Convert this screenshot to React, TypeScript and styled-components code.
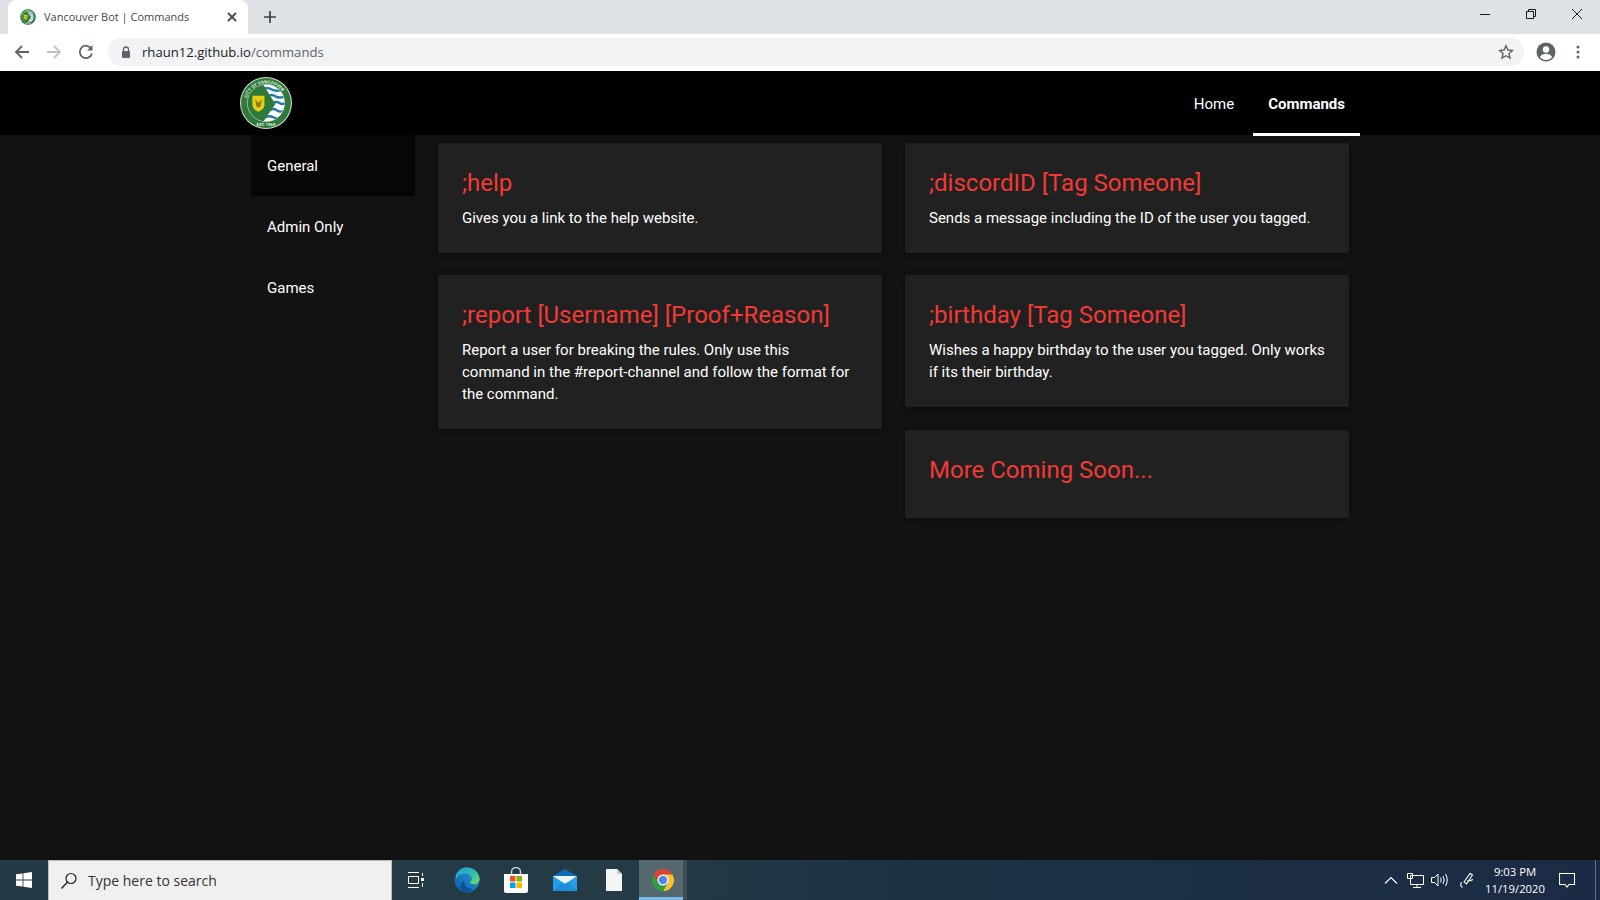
import React from 'react';
import styled, { createGlobalStyle } from 'styled-components';

const GlobalStyle = createGlobalStyle`
  html, body {
    margin: 0;
    padding: 0;
    height: 100%;
    overflow: hidden;
    background: #121212;
  }
  * {
    box-sizing: border-box;
  }
`;

const Screen = styled.div`
  width: 1600px;
  height: 900px;
  display: flex;
  flex-direction: column;
`;

/* browser chrome */
const TabStrip = styled.div`
  height: 34px;
  background: #dee1e6;
  display: flex;
  align-items: flex-end;
  padding-left: 8px;
`;

const Tab = styled.div`
  width: 240px;
  height: 34px;
  background: #fff;
  border-radius: 8px 8px 0 0;
  display: flex;
  align-items: center;
  padding: 0 8px 0 12px;
  gap: 8px;
`;

const TabTitle = styled.span`
  flex: 1;
  font-family: 'Open Sans', sans-serif;
  font-size: 11px;
  color: #45484c;
  white-space: nowrap;
  padding-bottom: 1px;
`;

const NewTab = styled.div`
  width: 28px;
  height: 34px;
  margin-left: 8px;
  display: flex;
  align-items: center;
  justify-content: center;
`;

const WindowControls = styled.div`
  margin-left: auto;
  height: 28px;
  align-self: flex-start;
  display: flex;
`;

const WindowButton = styled.div`
  width: 46px;
  height: 28px;
  display: flex;
  align-items: center;
  justify-content: center;
`;

const Toolbar = styled.div`
  height: 37px;
  background: #fff;
  display: flex;
  align-items: center;
  padding: 0 0 1px 6px;
`;

const ToolButton = styled.div`
  width: 32px;
  height: 28px;
  display: flex;
  align-items: center;
  justify-content: center;
  flex: none;
`;

const Omnibox = styled.div`
  width: 1416px;
  height: 28px;
  margin-left: 6px;
  background: #f1f3f4;
  border-radius: 14px;
  display: flex;
  align-items: center;
  padding: 0 10px 0 13px;
  gap: 11px;
  flex: none;
`;

const Url = styled.span`
  flex: 1;
  font-family: 'Open Sans', sans-serif;
  font-size: 13.1px;
  color: #202124;
  white-space: nowrap;
`;

const UrlPath = styled.span`
  color: #5f6368;
`;

const ProfileSlot = styled(ToolButton)`
  margin-left: 6px;
`;

/* the page */
const Page = styled.div`
  flex: 1;
  min-height: 0;
  background: #121212;
  font-family: Roboto, sans-serif;
  display: flex;
  flex-direction: column;
`;

const Navbar = styled.nav`
  height: 64px;
  background: #000;
  display: flex;
  align-items: center;
  justify-content: space-between;
  padding: 0 240px;
  flex: none;
`;

const NavLinks = styled.div`
  display: flex;
  gap: 4px;
  height: 65px;
  align-self: flex-start;
  position: relative;
`;

const NavLink = styled.a<{ $active?: boolean }>`
  height: 65px;
  padding: 4px 15px 0;
  display: flex;
  align-items: center;
  color: #fff;
  font-size: 15px;
  font-weight: ${(p) => (p.$active ? 700 : 400)};
  border-bottom: 3px solid ${(p) => (p.$active ? '#fff' : 'transparent')};
`;

const Body = styled.div`
  display: flex;
  padding-left: 251px;
  flex: 1;
`;

const Sidebar = styled.div`
  width: 164px;
  flex: none;
  display: flex;
  flex-direction: column;
`;

const SideItem = styled.div<{ $active?: boolean }>`
  height: 61px;
  padding: 0 16px;
  display: flex;
  align-items: center;
  color: #fff;
  font-size: 15px;
  background: ${(p) => (p.$active ? '#060606' : 'transparent')};
`;

const Columns = styled.div`
  display: flex;
  gap: 23px;
  margin-left: 23px;
  padding-top: 8px;
`;

const Column = styled.div`
  width: 444px;
  display: flex;
  flex-direction: column;
  gap: 22px;
`;

const Card = styled.div`
  background: #212121;
  border-radius: 2px;
  padding: 24px;
  box-shadow: 0 2px 6px rgba(0, 0, 0, 0.35);
`;

const LastCard = styled(Card)`
  margin-top: 1px;
`;

const CardTitle = styled.h2`
  margin: 0 0 8px;
  color: #f23a35;
  font-size: 24px;
  font-weight: 400;
  line-height: 32px;
`;

const CardText = styled.p`
  margin: 0;
  color: #fff;
  font-size: 15px;
  line-height: 22px;
`;

/* windows taskbar */
const Taskbar = styled.div`
  height: 40px;
  flex: none;
  background: linear-gradient(90deg, #233a44 0%, #243a44 40%, #1d3044 60%, #1b2b45 100%);
  display: flex;
  align-items: stretch;
  font-family: 'Open Sans', sans-serif;
`;

const StartButton = styled.div`
  width: 48px;
  display: flex;
  align-items: center;
  justify-content: center;
`;

const SearchBox = styled.div`
  width: 344px;
  background: #f0f0f0;
  border: 1px solid #bcbcbc;
  border-bottom: none;
  display: flex;
  align-items: center;
  padding-left: 11px;
  gap: 10px;
  color: #333;
  font-size: 14px;
`;

const TaskIcons = styled.div`
  display: flex;
  gap: 1px;
`;

const TaskIcon = styled.div`
  width: 48px;
  display: flex;
  align-items: center;
  justify-content: center;
`;

const TaskView = styled(TaskIcon)`
  margin-right: 2px;
`;

const ActiveTask = styled(TaskIcon)`
  background:
    linear-gradient(#76b9ed, #76b9ed) left bottom / 44px 3px no-repeat,
    linear-gradient(90deg, #55686f 44px, #3c4f59 44px);
`;

const Tray = styled.div`
  margin-left: auto;
  display: flex;
  align-items: center;
`;

const TrayIcon = styled.div<{ $w: number }>`
  width: ${(p) => p.$w}px;
  display: flex;
  align-items: center;
  justify-content: center;
`;

const Clock = styled.div`
  width: 60px;
  color: #fff;
  font-size: 11.3px;
  line-height: 17px;
  text-align: center;
  white-space: nowrap;
  margin: 0 1px 0 2px;
`;

const Notify = styled.div`
  width: 42px;
  margin-right: 7px;
  display: flex;
  align-items: center;
  justify-content: center;
`;

const ShowDesktop = styled.div`
  width: 5px;
  height: 40px;
  border-left: 1px solid #66717f;
`;

const Logo = ({ size, id }: { size: number; id: string }) => (
  <svg width={size} height={size} viewBox="0 0 100 100">
    <defs>
      <path id={id} d="M12 50 A38 38 0 0 1 88 50" />
      <clipPath id={`${id}c`}>
        <circle cx="50" cy="50" r="36" />
      </clipPath>
    </defs>
    <circle cx="50" cy="50" r="50" fill="#cfdccf" />
    <circle cx="50" cy="50" r="48" fill="#2f7a3a" />
    <g clipPath={`url(#${id}c)`}>
      <rect x="14" y="14" width="72" height="72" fill="#fff" />
      <path d="M44 24q8-5 17 0t23 0M54 37q7-5 14 0t18 0M64 50q6-4 12 0t12 0M58 64q7-5 13 0t16 0M48 78q8-5 17 0t21 0" fill="none" stroke="#1f78ab" strokeWidth="4.500" />
      <path d="M10 10 H42 L68 52 L42 90 H10 Z" fill="#2f7a3a" />
    </g>
    <circle cx="50" cy="50" r="36" fill="none" stroke="#dfe9df" strokeWidth="0.800" />
    <path d="M24 36 H47 V54 Q47 62 35.500 67 Q24 62 24 54 Z" fill="#e6cf12" />
    <path d="M29 43 L35.500 50 L42 43 L39 58 H32 Z" fill="#8d7a12" />
    <text fontSize="8" fontWeight="700" fill="#e8f2e8" fontFamily="Roboto, sans-serif" letterSpacing="0.5">
      <textPath href={`#${id}`} startOffset="8%">CITY OF VANCOUVER</textPath>
    </text>
    <text x="50" y="94" fontSize="8" fontWeight="700" fill="#e8f2e8" textAnchor="middle" fontFamily="Roboto, sans-serif">EST. 1969</text>
  </svg>
);

const ChromeLogo = () => (
  <svg width="24" height="24" viewBox="0 0 24 24">
    <path d="M2.470 6.500A11 11 0 0 1 21.530 6.500H12L7.240 14.750Z" fill="#db4437" />
    <path d="M21.530 6.500A11 11 0 0 1 12 23L16.760 14.750L12 6.500Z" fill="#fbc02d" />
    <path d="M12 23A11 11 0 0 1 2.470 6.500L7.240 14.750H16.760Z" fill="#2f9e44" />
    <circle cx="12" cy="12" r="5.500" fill="#fff" />
    <circle cx="12" cy="12" r="4.200" fill="#4a84ee" />
  </svg>
);

const EdgeLogo = () => (
  <svg width="26" height="26" viewBox="0 0 26 26">
    <defs>
      <linearGradient id="edgeA" x1="0" y1="1" x2="1" y2="0">
        <stop offset="0" stopColor="#0c59a4" />
        <stop offset="1" stopColor="#2a9fde" />
      </linearGradient>
      <linearGradient id="edgeB" x1="0" y1="0" x2="1" y2="1">
        <stop offset="0" stopColor="#1b9de2" />
        <stop offset="0.6" stopColor="#35c1a1" />
        <stop offset="1" stopColor="#7fe04f" />
      </linearGradient>
    </defs>
    <circle cx="13" cy="13" r="12.500" fill="url(#edgeA)" />
    <path d="M2 8C5 2 9 .5 13 .5c7 0 12.500 5.500 12.500 11.500 0 3-2.400 5-5.600 5-2.400 0-4-.8-4.400-1.800 2-1 2.600-2.500 2.300-4C17.200 8 14 6 10 6.500 6 7 3.500 9 2 12z" fill="url(#edgeB)" />
    <path d="M10 14c0 5 4 8 9 8-2 2-5 3-7 3-4 0-6-4-5-7 .3-2 1.500-3.500 3-4z" fill="#0b4f94" />
  </svg>
);

const StoreLogo = () => (
  <svg width="24" height="26" viewBox="0 0 24 26">
    <path d="M7.500 8V5a4.500 4.500 0 0 1 9 0v3" fill="none" stroke="#c9cfd3" strokeWidth="1.500" />
    <path d="M0 7h24v17a2 2 0 0 1-2 2H2a2 2 0 0 1-2-2z" fill="#fff" />
    <rect x="6" y="9" width="5.500" height="5.500" fill="#f25022" />
    <rect x="12.500" y="9" width="5.500" height="5.500" fill="#7fba00" />
    <rect x="6" y="15.500" width="5.500" height="5.500" fill="#00a4ef" />
    <rect x="12.500" y="15.500" width="5.500" height="5.500" fill="#ffb900" />
  </svg>
);

const MailLogo = () => (
  <svg width="24" height="22" viewBox="0 0 24 22">
    <path d="M0 7L12 0l12 7v15H0z" fill="#0f6cbd" />
    <rect x="0" y="7" width="24" height="15" fill="#25a0e8" />
    <path d="M0 7h24L12 15z" fill="#eef3f7" />
    <path d="M0 22l9-9 3 2 3-2 9 9z" fill="#1c8fdb" />
  </svg>
);

const FileLogo = () => (
  <svg width="16" height="22" viewBox="0 0 16 22">
    <path d="M0 0h11l5 5v17H0z" fill="#f4f5f5" />
    <path d="M11 0l5 5h-5z" fill="#c9ccce" />
  </svg>
);

const App = () => {
  return (
    <Screen>
      <GlobalStyle />
      <TabStrip>
        <Tab>
          <Logo size={16} id="favicon" />
          <TabTitle>Vancouver Bot | Commands</TabTitle>
          <svg width="16" height="16" viewBox="0 0 16 16">
            <path d="M4 4l8 8M12 4l-8 8" stroke="#45484c" strokeWidth="1.800" />
          </svg>
        </Tab>
        <NewTab>
          <svg width="14" height="14" viewBox="0 0 14 14">
            <path d="M7 1v12M1 7h12" stroke="#3c4043" strokeWidth="1.700" />
          </svg>
        </NewTab>
        <WindowControls>
          <WindowButton>
            <svg width="10" height="10" viewBox="0 0 10 10">
              <path d="M0 5.500h10" stroke="#1a1a1a" strokeWidth="1" />
            </svg>
          </WindowButton>
          <WindowButton>
            <svg width="10" height="10" viewBox="0 0 10 10">
              <path d="M.5 2.500h7v7h-7zM2.500 2.500v-2h7v7h-2" fill="none" stroke="#1a1a1a" strokeWidth="1" />
            </svg>
          </WindowButton>
          <WindowButton>
            <svg width="10" height="10" viewBox="0 0 10 10">
              <path d="M0 0l10 10M10 0L0 10" stroke="#1a1a1a" strokeWidth="1" />
            </svg>
          </WindowButton>
        </WindowControls>
      </TabStrip>
      <Toolbar>
        <ToolButton>
          <svg width="16" height="16" viewBox="0 0 16 16">
            <path d="M15 8H2M8 2L2 8l6 6" fill="none" stroke="#5f6368" strokeWidth="1.800" />
          </svg>
        </ToolButton>
        <ToolButton>
          <svg width="16" height="16" viewBox="0 0 16 16">
            <path d="M1 8h13M8 2l6 6-6 6" fill="none" stroke="#bdc1c6" strokeWidth="1.800" />
          </svg>
        </ToolButton>
        <ToolButton>
          <svg width="16" height="16" viewBox="0 0 16 16">
            <path d="M13.500 5A6.200 6.200 0 1 0 14 9.500" fill="none" stroke="#5f6368" strokeWidth="1.800" />
            <path d="M14.500 1v5.500H9z" fill="#5f6368" />
          </svg>
        </ToolButton>
        <Omnibox>
          <svg width="10" height="13" viewBox="0 0 10 13">
            <path d="M2.500 5V3.500a2.500 2.500 0 0 1 5 0V5" fill="none" stroke="#5f6368" strokeWidth="1.300" />
            <rect x="1" y="5" width="8" height="7" rx="1" fill="#5f6368" />
          </svg>
          <Url>
            rhaun12.github.io<UrlPath>/commands</UrlPath>
          </Url>
          <svg width="16" height="16" viewBox="0 0 16 16">
            <path d="M8 1.800l1.900 4.200 4.500.5-3.400 3 1 4.500L8 11.700 4 14l1-4.500-3.400-3 4.500-.5z" fill="none" stroke="#5f6368" strokeWidth="1.400" />
          </svg>
        </Omnibox>
        <ProfileSlot>
          <svg width="20" height="20" viewBox="0 0 20 20">
            <circle cx="10" cy="10" r="9.500" fill="#5f6368" />
            <circle cx="10" cy="7.500" r="3.200" fill="#fff" />
            <path d="M3.800 15c1.500-2.400 3.800-3.200 6.200-3.200s4.700.8 6.200 3.200c-1.500 1.900-3.700 3-6.200 3s-4.700-1.100-6.200-3z" fill="#fff" />
          </svg>
        </ProfileSlot>
        <ToolButton>
          <svg width="4" height="14" viewBox="0 0 4 14">
            <circle cx="2" cy="2" r="1.500" fill="#5f6368" />
            <circle cx="2" cy="7" r="1.500" fill="#5f6368" />
            <circle cx="2" cy="12" r="1.500" fill="#5f6368" />
          </svg>
        </ToolButton>
      </Toolbar>
      <Page>
        <Navbar>
          <Logo size={52} id="brand" />
          <NavLinks>
            <NavLink>Home</NavLink>
            <NavLink $active>Commands</NavLink>
          </NavLinks>
        </Navbar>
        <Body>
          <Sidebar>
            <SideItem $active>General</SideItem>
            <SideItem>Admin Only</SideItem>
            <SideItem>Games</SideItem>
          </Sidebar>
          <Columns>
            <Column>
              <Card>
                <CardTitle>;help</CardTitle>
                <CardText>Gives you a link to the help website.</CardText>
              </Card>
              <Card>
                <CardTitle>;report [Username] [Proof+Reason]</CardTitle>
                <CardText>
                  Report a user for breaking the rules. Only use this command in the #report-channel and follow the format for the command.
                </CardText>
              </Card>
            </Column>
            <Column>
              <Card>
                <CardTitle>;discordID [Tag Someone]</CardTitle>
                <CardText>Sends a message including the ID of the user you tagged.</CardText>
              </Card>
              <Card>
                <CardTitle>;birthday [Tag Someone]</CardTitle>
                <CardText>Wishes a happy birthday to the user you tagged. Only works if its their birthday.</CardText>
              </Card>
              <LastCard>
                <CardTitle>More Coming Soon...</CardTitle>
              </LastCard>
            </Column>
          </Columns>
        </Body>
      </Page>
      <Taskbar>
        <StartButton>
          <svg width="16" height="16" viewBox="0 0 16 16">
            <path d="M0 2.300l6.600-.9v6.200H0zM7.400 1.300L16 0v7.600H7.400zM0 8.400h6.600v6.200L0 13.700zM7.400 8.400H16V16l-8.600-1.300z" fill="#fff" />
          </svg>
        </StartButton>
        <SearchBox>
          <svg width="18" height="18" viewBox="0 0 18 18">
            <circle cx="11" cy="6.500" r="5" fill="none" stroke="#222" strokeWidth="1.200" />
            <path d="M7.500 10L1.500 16.500" stroke="#222" strokeWidth="1.400" />
          </svg>
          Type here to search
        </SearchBox>
        <TaskIcons>
          <TaskView>
            <svg width="18" height="16" viewBox="0 0 18 16">
              <path d="M1 .5h11M1 15.500h11M1.500 4.500h10v7h-10z" fill="none" stroke="#fff" strokeWidth="1" />
              <rect x="14" y="6" width="3" height="3" fill="#fff" />
              <path d="M15.500 1v3M15.500 11v4" stroke="#fff" strokeWidth="1" />
            </svg>
          </TaskView>
          <TaskIcon><EdgeLogo /></TaskIcon>
          <TaskIcon><StoreLogo /></TaskIcon>
          <TaskIcon><MailLogo /></TaskIcon>
          <TaskIcon><FileLogo /></TaskIcon>
          <ActiveTask><ChromeLogo /></ActiveTask>
        </TaskIcons>
        <Tray>
          <TrayIcon $w={24}>
            <svg width="14" height="8" viewBox="0 0 14 8">
              <path d="M1 7.500l6-6 6 6" fill="none" stroke="#fff" strokeWidth="1.100" />
            </svg>
          </TrayIcon>
          <TrayIcon $w={24}>
            <svg width="17" height="15" viewBox="0 0 17 15">
              <path d="M3.500 2.500h13v9h-13zM.5.500h5v5h-5zM10 11.500v3M6 14.500h8" fill="#1c2d44" stroke="#fff" strokeWidth="1" />
            </svg>
          </TrayIcon>
          <TrayIcon $w={24}>
            <svg width="17" height="14" viewBox="0 0 17 14">
              <path d="M.5 4.500h3L7 1v12L3.500 9.500h-3z" fill="none" stroke="#fff" strokeWidth="1" />
              <path d="M9.500 4.500q1.500 2.500 0 5M12 3q2.500 4 0 8M14.500 1q3.500 6 0 12" fill="none" stroke="#fff" strokeWidth="1" />
            </svg>
          </TrayIcon>
          <TrayIcon $w={32}>
            <svg width="17" height="17" viewBox="0 0 17 17">
              <path d="M5 10L11 1.500l2.500 1.500-6 9zM2.500 10q-2 4 1 5.500M8 9q4 0 6-1.500" fill="none" stroke="#fff" strokeWidth="1.100" />
            </svg>
          </TrayIcon>
          <Clock>
            9:03 PM
            <br />
            11/19/2020
          </Clock>
          <Notify>
            <svg width="17" height="17" viewBox="0 0 17 17">
              <path d="M.5 1.500h15v11H10L8 15l-2-2.500H.5z" fill="none" stroke="#fff" strokeWidth="1.100" />
            </svg>
          </Notify>
          <ShowDesktop />
        </Tray>
      </Taskbar>
    </Screen>
  );
};

export default App;
